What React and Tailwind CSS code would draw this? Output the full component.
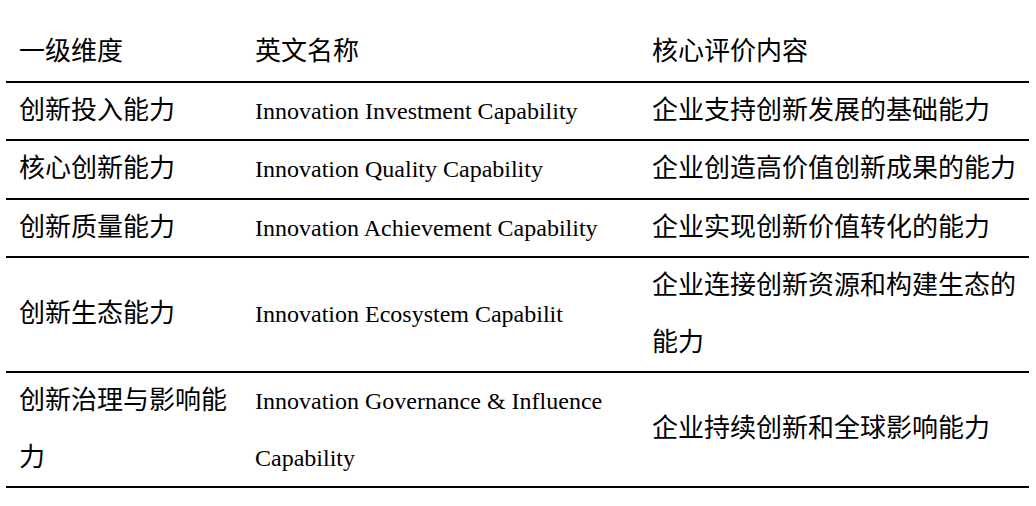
const rows = [
  ['创新投入能力', 'Innovation Investment Capability', '企业支持创新发展的基础能力'],
  ['核心创新能力', 'Innovation Quality Capability', '企业创造高价值创新成果的能力'],
  ['创新质量能力', 'Innovation Achievement Capability', '企业实现创新价值转化的能力'],
  ['创新生态能力', 'Innovation Ecosystem Capabilit', '企业连接创新资源和构建生态的能力'],
  ['创新治理与影响能力', 'Innovation Governance & Influence Capability', '企业持续创新和全球影响能力'],
];

const font = { fontFamily: '"Liberation Serif", "Noto Sans CJK SC", serif' };

export default function App() {
  return (
    <div className="w-[1036px] h-[506px] bg-white pt-[24px] pl-[6px]" style={font}>
      <table className="w-[1023px] table-fixed border-collapse text-black">
        <colgroup>
          <col className="w-[236px]" />
          <col className="w-[397px]" />
          <col className="w-[390px]" />
        </colgroup>
        <thead>
          <tr className="border-b-2 border-black">
            <th className="pl-[13px] pr-[10px] text-left align-middle font-normal text-[26px] leading-[56.5px]">一级维度</th>
            <th className="pl-[13px] pr-[10px] text-left align-middle font-normal text-[26px] leading-[56.5px]">英文名称</th>
            <th className="pl-[13px] pr-[10px] text-left align-middle font-normal text-[26px] leading-[56.5px]">核心评价内容</th>
          </tr>
        </thead>
        <tbody>
          {rows.map((r) => (
            <tr key={r[0]} className="border-b-2 border-black">
              <td className="pl-[13px] pr-[10px] align-middle text-[26px] leading-[56.5px]">{r[0]}</td>
              <td className="pl-[13px] pr-[10px] align-middle text-[24px] leading-[56.5px]">{r[1]}</td>
              <td className="pl-[13px] pr-[10px] align-middle text-[26px] leading-[56.5px]">{r[2]}</td>
            </tr>
          ))}
        </tbody>
      </table>
    </div>
  );
}
